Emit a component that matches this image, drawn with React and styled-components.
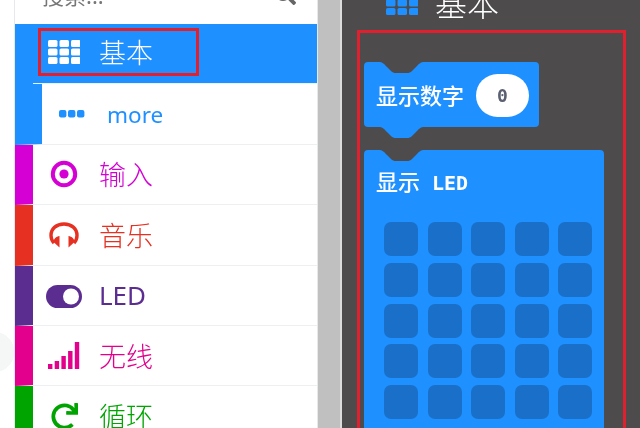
import React from 'react'
import styled, { createGlobalStyle } from 'styled-components'
import { FaSearch, FaRedo } from 'react-icons/fa'

const BLUE = '#1e90ff'
const CJK = '"Noto Sans CJK SC", sans-serif'
const NOTCH = `path('M0 0 C5 0 6 2 9 5 L13 9 C14.5 10.5 16 11 18 11 L29 11 C31 11 32.5 10.5 34 9 L38 5 C41 2 42 0 47 0 Z')`

const GridIcon = ({ color }) => (
  <svg width="32" height="24" viewBox="0 0 32 24">
    {[0, 1, 2].map(r =>
      [0, 1, 2].map(c => (
        <rect key={`${r}${c}`} x={c * 11.5} y={r * 8.5} width="9.5" height="7" rx="1.6" fill={color} />
      ))
    )}
  </svg>
)

const DotsIcon = () => (
  <svg width="26" height="8" viewBox="0 0 26 8">
    {[0, 9, 18].map(x => (
      <rect key={x} x={x} y="0" width="7.4" height="7.4" rx="2" fill={BLUE} />
    ))}
  </svg>
)

const TargetIcon = ({ color }) => (
  <svg width="28" height="28" viewBox="0 0 28 28">
    <circle cx="14" cy="14" r="11.2" fill="none" stroke={color} strokeWidth="4" />
    <circle cx="14" cy="14" r="4.6" fill={color} />
  </svg>
)

const HeadphoneIcon = ({ color }) => (
  <svg width="30" height="26" viewBox="0 0 30 26">
    <path d="M5 21 C2.5 18.5 2 16 2 13.5 C2 6.5 7.5 2 15 2 C22.5 2 28 6.5 28 13.5 C28 16 27.5 18.5 25 21" fill="none" stroke={color} strokeWidth="3.4" />
    <path d="M10.5 14 L10.5 25.5 L4.5 20 C4.5 17 7 14.5 10.5 14 Z" fill={color} />
    <path d="M19.5 14 L19.5 25.5 L25.5 20 C25.5 17 23 14.5 19.5 14 Z" fill={color} />
  </svg>
)

const ToggleIcon = ({ color }) => (
  <svg width="36" height="25" viewBox="0 0 36 25">
    <rect x="0" y="2" width="36" height="23" rx="11.5" fill={color} />
    <circle cx="25" cy="13.5" r="8" fill="#fff" />
  </svg>
)

const SignalIcon = ({ color }) => (
  <svg width="32" height="27" viewBox="0 0 32 27">
    {[22, 19, 14, 9, 0].map((y, i) => (
      <rect key={y} x={i * 6.7} y={y} width="4.4" height={27 - y} fill={color} />
    ))}
  </svg>
)

const rows = [
  { label: '输入', color: '#d400d4', icon: TargetIcon },
  { label: '音乐', color: '#e63022', icon: HeadphoneIcon },
  { label: 'LED', color: '#5c2d91', icon: ToggleIcon, latin: true, size: 26, shift: -1 },
  { label: '无线', color: '#e3008c', icon: SignalIcon },
  { label: '循环', color: '#00a400', icon: ({ color }) => <FaRedo size={27} color={color} /> },
]

const App = () => (
  <Page>
    <GlobalStyle />
    <Panel>
      <SearchRow>
        <SearchText>搜索...</SearchText>
        <FaSearch size={22} color="#666" />
      </SearchRow>
      <Row $color={BLUE} $active>
        <Highlight>
          <IconSlot><GridIcon color="#fff" /></IconSlot>
          <Label $color="#fff">基本</Label>
        </Highlight>
      </Row>
      <Row $color={BLUE} $sub>
        <IconSlot><DotsIcon /></IconSlot>
        <Label $color={BLUE} $size={22.5} $latin $shift={3}>more</Label>
      </Row>
      {rows.map(({ label, color, icon: Icon, latin, size, shift }) => (
        <Row key={label} $color={color}>
          <IconSlot><Icon color={color} /></IconSlot>
          <Label $color={color} $latin={latin} $size={size} $shift={shift}>{label}</Label>
        </Row>
      ))}
    </Panel>
    <Divider />
    <Flyout>
      <FlyoutTitle>
        <GridIcon color={BLUE} />
        <TitleText>基本</TitleText>
      </FlyoutTitle>
      <RedBox>
        <NumberBlock>
          <BlockText>显示数字</BlockText>
          <NumberField>0</NumberField>
        </NumberBlock>
        <LedBlock>
          <BlockText>显示<LedWord>LED</LedWord></BlockText>
          <LedGrid>
            {Array.from({ length: 25 }, (_, i) => <LedCell key={i} />)}
          </LedGrid>
        </LedBlock>
      </RedBox>
    </Flyout>
  </Page>
)

const GlobalStyle = createGlobalStyle`
  html, body {
    margin: 0;
    padding: 0;
    background: #fff;
  }
`

const Page = styled.div`
  width: 640px;
  height: 428px;
  display: flex;
  overflow: hidden;
  padding-left: 14px;
  box-sizing: border-box;
  background: radial-gradient(circle at -6px 352px, #f5f6f6 20px, transparent 20.5px), #fff;
  font-family: "Noto Sans", ${CJK};
  filter: blur(0.35px);
`

const Panel = styled.div`
  width: 304px;
  flex-shrink: 0;
  margin-top: -36px;
  background: #fff;
  border-left: 1px solid #e6e8ea;
  border-right: 1px solid #e6e8ea;
  box-sizing: border-box;
`

const SearchRow = styled.div`
  height: 60px;
  display: flex;
  align-items: center;
  justify-content: space-between;
  padding: 0 21px 0 27px;
  box-sizing: border-box;
`

const SearchText = styled.span`
  font-size: 22px;
  color: #777;
`

const Row = styled.div`
  position: relative;
  height: 60.4px;
  display: flex;
  align-items: center;
  gap: 15px;
  box-sizing: border-box;
  border-left: ${p => (p.$sub ? 27 : 18)}px solid ${p => p.$color};
  border-bottom: 1px solid ${p => (p.$active ? BLUE : '#eeeff0')};
  padding-left: ${p => (p.$sub ? 10 : p.$active ? 0 : 11)}px;
  background: ${p => (p.$active ? BLUE : '#fff')};

  ${p => p.$active && `
    &::after {
      content: '';
      position: absolute;
      left: 0;
      right: 0;
      bottom: -1px;
      height: 1px;
      background: #e8f3ff;
    }
  `}
`

const Highlight = styled.div`
  width: 161px;
  height: 48px;
  margin: 0 0 4px 5px;
  padding-left: 3px;
  display: flex;
  align-items: center;
  gap: 15px;
  box-sizing: border-box;
  border: 3px solid #e0202f;
`

const IconSlot = styled.div`
  width: 40px;
  display: flex;
  justify-content: center;
  align-items: center;
`

const Label = styled.span`
  margin-top: ${p => p.$shift ?? 1}px;
  font-size: ${p => p.$size || 27}px;
  font-weight: ${p => (p.$latin ? 400 : 300)};
  line-height: 1;
  color: ${p => p.$color};
`

const Divider = styled.div`
  width: 24px;
  flex-shrink: 0;
  background: #c0c0c0;
  border-right: 2px solid #dcdcdc;
  box-sizing: border-box;
`

const Flyout = styled.div`
  flex: 1;
  background: #4d4b4c;
  padding-left: 15px;
`

const FlyoutTitle = styled.div`
  height: 54px;
  margin-top: -24px;
  padding-left: 29px;
  display: flex;
  align-items: center;
  gap: 17px;
  font-size: 32px;
  font-weight: 300;
  color: #fff;
`

const TitleText = styled.span`
  margin-top: -2px;
`

const RedBox = styled.div`
  width: 269px;
  height: 500px;
  box-sizing: border-box;
  border: 3px solid #e0202f;
  padding: 29px 0 0 4px;
`

const Block = styled.div`
  position: relative;
  background: ${BLUE};
  border-radius: 4px;

  &::before {
    content: '';
    position: absolute;
    top: 0;
    left: 14px;
    width: 47px;
    height: 11px;
    background: #4d4b4c;
    clip-path: ${NOTCH};
  }
`

const NumberBlock = styled(Block)`
  width: 175px;
  height: 65px;
  display: flex;
  align-items: center;
  gap: 12px;
  padding: 2px 0 0 12px;
  box-sizing: border-box;

  &::after {
    content: '';
    position: absolute;
    top: 100%;
    left: 14px;
    width: 47px;
    height: 11px;
    background: ${BLUE};
    clip-path: ${NOTCH};
  }
`

const LedBlock = styled(Block)`
  width: 240px;
  margin-top: 23px;
  padding: 18px 0 30px 12px;
  box-sizing: border-box;
`

const BlockText = styled.div`
  height: 28px;
  line-height: 24px;
  font-family: ${CJK};
  font-size: 22px;
  font-weight: 500;
  white-space: pre;
  color: #fff;
`

const LedWord = styled.span`
  margin-left: 12px;
  font-family: "DejaVu Sans Mono", monospace;
  font-size: 20px;
  font-weight: 700;
`

const NumberField = styled.div`
  width: 53px;
  height: 43px;
  border-radius: 21.5px;
  background: #fff;
  display: flex;
  align-items: center;
  justify-content: center;
  font-family: "DejaVu Sans Mono", monospace;
  font-size: 18px;
  font-weight: 700;
  color: #5b6072;
`

const LedGrid = styled.div`
  display: grid;
  grid-template-columns: repeat(5, 34px);
  grid-auto-rows: 34px;
  column-gap: 9.5px;
  row-gap: 6.75px;
  margin: 26px 0 0 8px;
`

const LedCell = styled.div`
  background: #1a70c8;
  border-radius: 7px;
`

export default App
